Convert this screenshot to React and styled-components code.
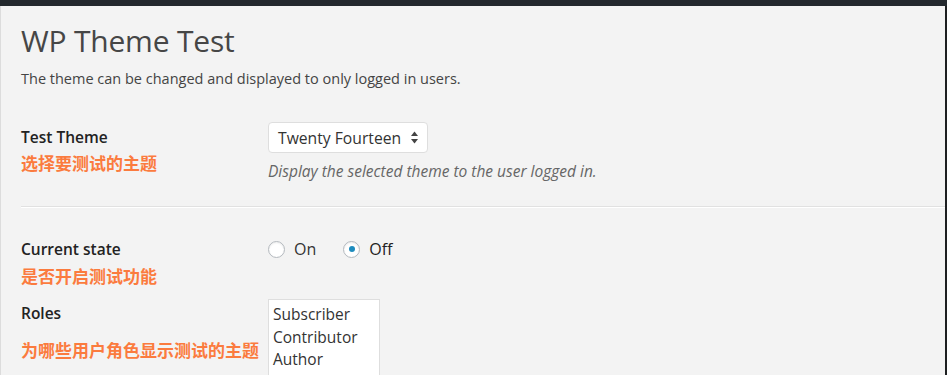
import React from "react";
import styled, { createGlobalStyle } from "styled-components";

const Global = createGlobalStyle`
  html, body { margin: 0; padding: 0; height: 375px; overflow: hidden; background: #f3f3f3; }
  body { font-family: "Open Sans", "Noto Sans CJK SC", sans-serif; color: #444; }
`;

const Shell = styled.div`
  display: flex;
  flex-direction: column;
  height: 375px;
  overflow: hidden;
`;

const TopBar = styled.div`
  height: 6px;
  background: #23282d;
  flex: none;
`;

const Body = styled.div`
  flex: 1;
  display: flex;
  border-left: 1px solid #dcdcdc;
  border-right: 2px solid #1d1f21;
  overflow: hidden;
`;

const Wrap = styled.div`
  flex: 1;
  padding: 0 0 0 20px;
`;

const Title = styled.h1`
  margin: 15px 0 0 0;
  font-size: 30px;
  font-weight: 400;
  line-height: 40px;
  color: #464646;
  letter-spacing: -0.2px;
`;

const Intro = styled.p`
  margin: 8px 0 0 0;
  font-size: 14.5px;
  line-height: 20px;
  color: #444;
`;

const Row = styled.div`
  display: grid;
  grid-template-columns: 247px 1fr;
  padding-top: ${(p) => p.$top || 0}px;
`;

const LabelCell = styled.div`
  display: flex;
  flex-direction: column;
  padding-top: ${(p) => p.$top || 0}px;
`;

const Label = styled.div`
  font-size: 15.5px;
  font-weight: 600;
  line-height: 22px;
  color: #222;
`;

const Note = styled.div`
  margin-top: ${(p) => p.$gap || 6}px;
  font-family: "Noto Sans CJK SC", sans-serif;
  font-size: 17px;
  font-weight: 700;
  line-height: 22px;
  color: #fb7b3e;
`;

const FieldCell = styled.div`
  display: flex;
  flex-direction: column;
  align-items: flex-start;
`;

const Select = styled.div`
  box-sizing: border-box;
  width: 160px;
  height: 31px;
  display: flex;
  align-items: center;
  justify-content: space-between;
  padding: 0 8px 0 9px;
  background: #fff;
  border: 1px solid #dedede;
  border-radius: 4px;
  font-size: 15.7px;
  color: #333;
`;

const Desc = styled.p`
  margin: 8px 0 0 0;
  font-size: 15.5px;
  font-style: italic;
  line-height: 20px;
  color: #666;
`;

const Divider = styled.div`
  margin-top: 25px;
  height: 1px;
  background: #e1e1e1;
  border-bottom: 1px solid #fff;
`;

const Radios = styled.div`
  display: flex;
  align-items: center;
  gap: 27px;
`;

const RadioItem = styled.label`
  display: flex;
  align-items: center;
  gap: 9px;
  font-size: 16px;
  color: ${(p) => (p.$checked ? "#222" : "#333")};
`;

const RadioCircle = styled.span`
  box-sizing: border-box;
  width: 17px;
  height: 17px;
  border-radius: 50%;
  border: 1px solid #b4b9be;
  background: #fff;
  box-shadow: inset 0 1px 2px rgba(0, 0, 0, 0.08);
  display: flex;
  align-items: center;
  justify-content: center;
  &::after {
    content: "";
    width: 6px;
    height: 6px;
    border-radius: 50%;
    background: ${(p) => (p.$checked ? "#1e8cbe" : "transparent")};
  }
`;

const ListBox = styled.div`
  box-sizing: border-box;
  width: 112px;
  height: 110px;
  background: #fff;
  border: 1px solid #dedede;
  padding: 3px 4px;
`;

const Option = styled.div`
  font-size: 15.5px;
  line-height: 22.5px;
  color: #333;
  white-space: nowrap;
`;

const Arrows = () => (
  <svg width="9" height="13" viewBox="0 0 9 13">
    <path d="M4.5 0.5 L8 5 L1 5 Z" fill="#444" />
    <path d="M4.5 12.5 L8 8 L1 8 Z" fill="#444" />
  </svg>
);

export default function App() {
  return (
    <>
      <Global />
      <Shell>
        <TopBar />
        <Body>
          <Wrap>
            <Title>WP Theme Test</Title>
            <Intro>The theme can be changed and displayed to only logged in users.</Intro>

            <Row $top={33}>
              <LabelCell $top={4}>
                <Label>Test Theme</Label>
                <Note $gap={4}>选择要测试的主题</Note>
              </LabelCell>
              <FieldCell>
                <Select>
                  <span>Twenty Fourteen</span>
                  <Arrows />
                </Select>
                <Desc>Display the selected theme to the user logged in.</Desc>
              </FieldCell>
            </Row>

            <Divider />

            <Row $top={30}>
              <LabelCell>
                <Label>Current state</Label>
                <Note $gap={5}>是否开启测试功能</Note>
              </LabelCell>
              <FieldCell>
                <Radios>
                  <RadioItem>
                    <RadioCircle />
                    On
                  </RadioItem>
                  <RadioItem $checked>
                    <RadioCircle $checked />
                    Off
                  </RadioItem>
                </Radios>
              </FieldCell>
            </Row>

            <Row $top={12}>
              <LabelCell $top={3}>
                <Label>Roles</Label>
                <Note $gap={15}>为哪些用户角色显示测试的主题</Note>
              </LabelCell>
              <FieldCell>
                <ListBox>
                  <Option>Subscriber</Option>
                  <Option>Contributor</Option>
                  <Option>Author</Option>
                  <Option>Editor</Option>
                  <Option>Administrator</Option>
                </ListBox>
              </FieldCell>
            </Row>
          </Wrap>
        </Body>
      </Shell>
    </>
  );
}
